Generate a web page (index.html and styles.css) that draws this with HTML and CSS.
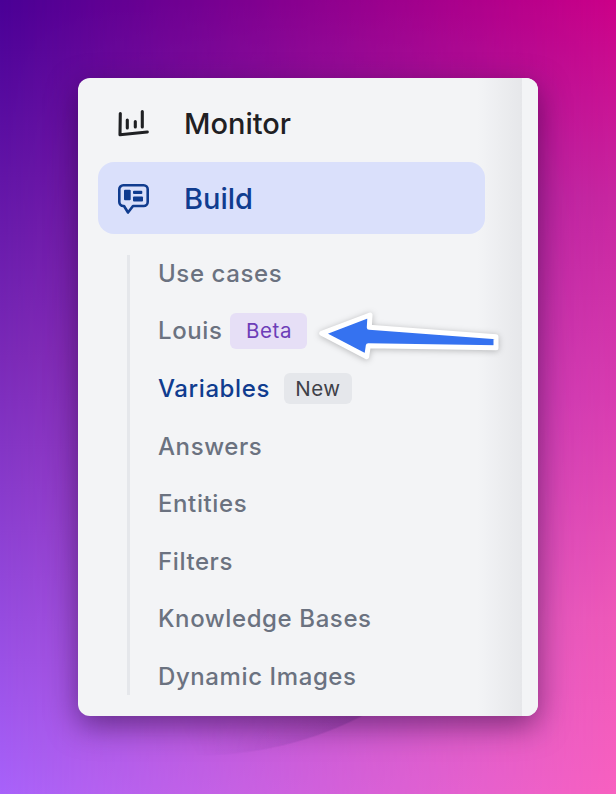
FILE: index.html
```html
<!DOCTYPE html>
<html lang="en">
<head>
    <meta charset="UTF-8">
    <meta name="viewport" content="width=device-width, initial-scale=1.0">
    <title>Sidebar</title>
    <link rel="stylesheet" href="styles.css">
</head>
<body>
    <div class="panel">
        <div class="nav-scroll">
            <div class="nav-item">
                <svg class="nav-icon" viewBox="0 0 32 32" fill="none" stroke="currentColor" stroke-width="3.100" stroke-linecap="round" stroke-linejoin="round">
                    <path d="M2.300 6.500L2 27.700l27.300-2.700"/>
                    <path d="M9.300 13v8M17.300 14.500v5.500M24.300 4.500V20"/>
                </svg>
                <span>Monitor</span>
            </div>
            <div class="nav-item active">
                <svg class="nav-icon" viewBox="0 0 32 32" fill="none">
                    <path d="M5.300 3.300h20.400a4 4 0 0 1 4 4V20a4 4 0 0 1-4 4H15l-5 6.500L6 24h-.7a4 4 0 0 1-4-4V7.300a4 4 0 0 1 4-4z" stroke="currentColor" stroke-width="2.600" stroke-linejoin="round"/>
                    <rect x="6" y="7.700" width="6.700" height="10.600" rx="1" fill="currentColor"/>
                    <rect x="15" y="8.700" width="9.300" height="3.300" rx="1" fill="currentColor"/>
                    <rect x="15" y="14.500" width="10" height="5" rx="1" fill="currentColor"/>
                </svg>
                <span>Build</span>
            </div>
            <ul class="sub-list">
                <li>Use cases</li>
                <li>Louis <span class="badge beta">Beta</span></li>
                <li class="current">Variables <span class="badge new">New</span></li>
                <li>Answers</li>
                <li>Entities</li>
                <li>Filters</li>
                <li>Knowledge Bases</li>
                <li>Dynamic Images</li>
            </ul>
        </div>
        <div class="rail"></div>
        <svg class="arrow" viewBox="0 0 200 60" fill="#3572f0" stroke="#fff" stroke-width="5" stroke-linejoin="round">
            <polygon points="11.700,23.300 60,5 59.300,17.300 186,26.700 186,37.700 58.300,35.700 56.700,46.700"/>
        </svg>
    </div>
</body>
</html>
```

FILE: styles.css
```css
html, body {
    height: 100%;
}
body {
    position: relative;
    margin: 0;
    padding: 78px;
    box-sizing: border-box;
    font-family: Inter, "Noto Sans", sans-serif;
    background: linear-gradient(180deg, #4a0096 0%, #7a2ab8 45%, #a862fa 100%);
}
/* right-hand colours fade in over the left-hand ones */
body::before {
    content: "";
    position: absolute;
    inset: 0;
    background: linear-gradient(180deg, #cc0088 0%, #c826a0 25%, #d83cb0 50%, #ee58b8 78%, #f860c0 100%);
    -webkit-mask-image: linear-gradient(90deg, transparent 0%, #000 100%);
    mask-image: linear-gradient(90deg, transparent 0%, #000 100%);
}
/* dark arc that shows below the panel */
body::after {
    content: "";
    position: absolute;
    left: 0;
    right: 0;
    bottom: 0;
    height: 194px;
    background: radial-gradient(circle 356px at 200px -200px, transparent 80%, rgba(50, 20, 110, 0.2) 99.500%, transparent 100%);
    -webkit-mask-image: linear-gradient(60deg, transparent 30%, #000 56%);
    mask-image: linear-gradient(60deg, transparent 30%, #000 56%);
}
.panel {
    position: relative;
    z-index: 1;
    display: flex;
    width: 460px;
    height: 638px;
    background: #f3f4f6;
    border-radius: 12px;
    overflow: hidden;
    box-shadow: 0 10px 30px rgba(30, 0, 50, 0.5);
}
.nav-scroll {
    flex: 1;
    min-width: 0;
    padding: 9px 37px 0 20px;
    background: linear-gradient(90deg, rgba(229, 231, 235, 0) 90%, #e6e7ea 100%);
}
.rail {
    width: 16px;
    background: #f3f4f6;
}
.nav-item {
    display: flex;
    align-items: center;
    gap: 35px;
    height: 72px;
    padding-left: 20px;
    margin-bottom: 3px;
    border-radius: 16px;
    font-size: 29px;
    font-weight: 450;
    color: #1f2023;
}
.nav-item span {
    margin-left: -1px;
}
.nav-item.active {
    background: #dae0fb;
    color: #103c8f;
}
.nav-icon {
    width: 32px;
    height: 32px;
    flex-shrink: 0;
}
.sub-list {
    display: flex;
    flex-direction: column;
    list-style: none;
    margin: 21px 0 0 29px;
    padding: 0 0 0 28px;
    border-left: 3px solid #e5e7eb;
    height: 440px;
    font-size: 24px;
    font-weight: 500;
    letter-spacing: 0.600px;
    color: #6b7280;
}
.sub-list li {
    display: flex;
    flex: none;
    align-items: center;
    height: 57.600px;
    white-space: nowrap;
}
.sub-list li:first-child {
    margin-top: -10.500px;
}
.sub-list li.current {
    color: #103c8f;
}
.badge {
    display: inline-flex;
    align-items: center;
    justify-content: center;
    border-radius: 6px;
    font-size: 20.500px;
    font-weight: 420;
}
.beta {
    width: 77px;
    height: 36px;
    margin-left: 8px;
    background: #e6dff6;
    color: #6d3db8;
}
.new {
    width: 68px;
    height: 31px;
    margin-left: 14px;
    background: #e5e7eb;
    color: #3f4148;
}
.arrow {
    position: absolute;
    left: 232px;
    top: 232px;
    width: 200px;
    height: 60px;
    overflow: visible;
    filter: drop-shadow(0 1px 3px rgba(0, 0, 0, 0.25));
}
```
